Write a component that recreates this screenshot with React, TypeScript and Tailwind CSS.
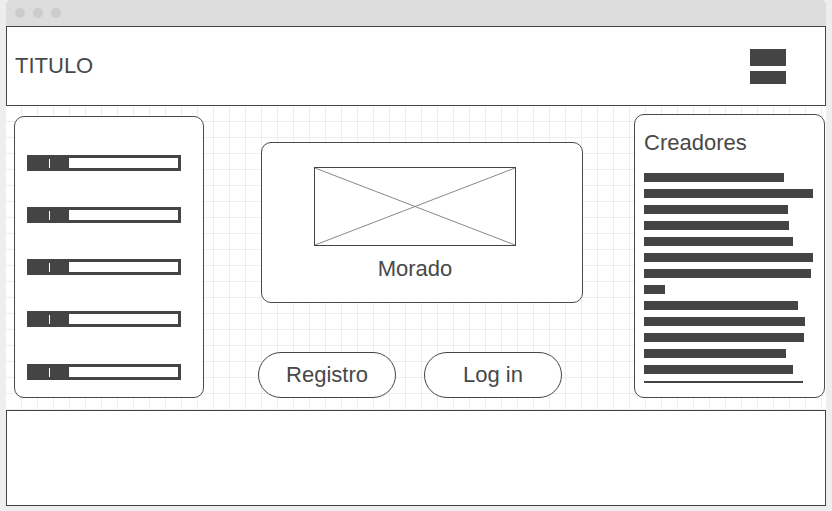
import React from 'react';

const creatorBars = [140, 169, 144, 145, 149, 169, 167, 21, 154, 161, 160, 142, 149];
const sliders = [0, 1, 2, 3, 4];

const Slider: React.FC = () => (
  <div className="flex h-4 w-[154px] bg-[#444] p-[3px]">
    <div className="flex w-[39px] items-center pl-[19px]">
      <div className="h-[9px] w-px bg-white" />
    </div>
    <div className="flex-1 bg-white" />
  </div>
);

const PillButton: React.FC<{ label: string }> = ({ label }) => (
  <button className="flex h-[46px] w-[138px] items-center justify-center rounded-full border border-[#444] bg-white pb-[2px] text-[22px] leading-[25px] text-[#484848]">
    {label}
  </button>
);

export default function App() {
  return (
    <div
      className="h-[511px] w-[832px] bg-[#eeeeee] px-[6px] pb-[5px]"
      style={{ fontFamily: '"Liberation Sans", Arial, sans-serif' }}
    >
      <div className="flex h-full flex-col">
        {/* window chrome */}
        <div className="flex h-[26px] items-center gap-2 rounded-t-[5px] bg-[#dddddd] pl-[9px]">
          <span className="h-[10px] w-[10px] rounded-full bg-[#cccccc]" />
          <span className="h-[10px] w-[10px] rounded-full bg-[#cccccc]" />
          <span className="h-[10px] w-[10px] rounded-full bg-[#cccccc]" />
        </div>

        {/* header */}
        <header className="flex h-[80px] items-center justify-between border border-[#444] bg-white pl-2 pr-[39px]">
          <h1 className="mb-[2px] text-[22px] leading-[25px] text-[#484848]">TITULO</h1>
          <div className="flex flex-col gap-[5px]">
            <div className="h-[17px] w-[36px] bg-[#444]" />
            <div className="h-[13px] w-[36px] bg-[#444]" />
          </div>
        </header>

        {/* main */}
        <main className="flex h-[304px] items-start bg-white pl-2 [background-image:linear-gradient(to_right,transparent_15px,#ededed_15px),linear-gradient(to_bottom,transparent_15px,#ededed_15px)] [background-size:16px_16px]">
          <aside className="mt-[10px] flex h-[282px] w-[190px] flex-col gap-[36px] rounded-[10px] border border-[#4a4a4a] bg-white pl-3 pt-[38px]">
            {sliders.map((i) => (
              <div key={i} className={i === 4 ? 'mt-px' : ''}>
                <Slider />
              </div>
            ))}
          </aside>

          <section className="ml-[54px] mt-[36px] w-[325px]">
            <div className="ml-[3px] h-[161px] w-[322px] rounded-[10px] border border-[#4a4a4a] bg-white pl-[52px] pt-[24px]">
              <div className="h-[79px] w-[202px] border border-[#444]">
                <svg className="block h-full w-full" viewBox="0 0 200 77" preserveAspectRatio="none">
                  <line x1="0" y1="0" x2="200" y2="77" stroke="#888" strokeWidth="1" vectorEffect="non-scaling-stroke" />
                  <line x1="0" y1="77" x2="200" y2="0" stroke="#888" strokeWidth="1" vectorEffect="non-scaling-stroke" />
                </svg>
              </div>
              <p className="mt-[10px] w-[202px] text-center text-[22px] leading-[25px] text-[#484848]">Morado</p>
            </div>
            <div className="mt-[49px] flex gap-[28px]">
              <PillButton label="Registro" />
              <PillButton label="Log in" />
            </div>
          </section>

          <aside className="ml-[51px] mt-2 h-[284px] w-[191px] overflow-hidden rounded-[10px] border border-[#4a4a4a] bg-white pl-[9px] pt-[15px]">
            <h2 className="text-[22px] leading-[25px] text-[#484848]">Creadores</h2>
            <div className="mt-[18px] flex flex-col gap-[7px]">
              {creatorBars.map((w, i) => (
                <div key={i} className="h-[9px] bg-[#444]" style={{ width: w }} />
              ))}
              <div className="h-[2px] w-[159px] bg-[#444]" />
            </div>
          </aside>
        </main>

        {/* footer */}
        <footer className="h-[96px] border border-[#444] bg-white" />
      </div>
    </div>
  );
}
